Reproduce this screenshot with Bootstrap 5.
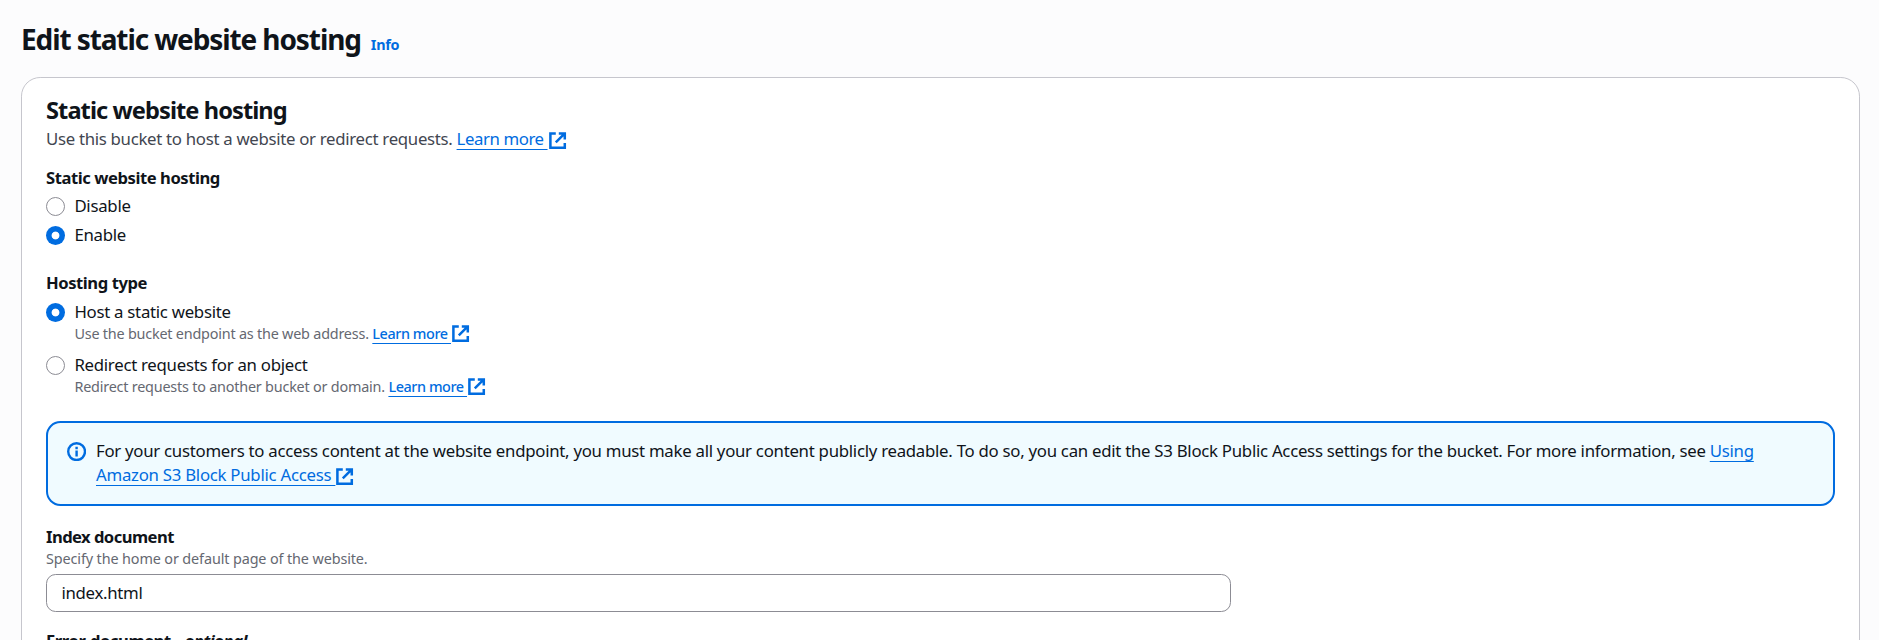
<!DOCTYPE html>
<html lang="en">
<head>
<meta charset="utf-8">
<meta name="viewport" content="width=device-width, initial-scale=1">
<title>Edit static website hosting</title>
<link href="https://cdn.jsdelivr.net/npm/bootstrap@5.3.0/dist/css/bootstrap.min.css" rel="stylesheet">
<style>
  body { font-family: "Noto Sans", "Open Sans", sans-serif; font-size: 16.8px; line-height: 24px; letter-spacing: -.27px; color: #0f141a; background: #fcfcfd; height: 640px; overflow: hidden; }
  .page-wrap { padding: 21px 19.5px 0 21px; height: 640px; overflow: hidden; }
  h1 { font-size: 28px; line-height: 36px; font-weight: 700; letter-spacing: -1.1px; }
  h2 { font-size: 23.6px; line-height: 30px; font-weight: 700; letter-spacing: -.92px; }
  a { color: #006ce0; text-decoration: none; }
  .info-link { font-size: 14.4px; font-weight: 700; letter-spacing: -.3px; margin-left: 10px; }
  .panel { border: 1px solid #c6c6cd; border-radius: 19.2px; padding: 17px 24px 0; margin-top: 20px; min-height: 620px; }
  .desc { color: #424650; margin-top: 2px; letter-spacing: -.3px; }
  .field-label { font-size: 16.6px; font-weight: 700; letter-spacing: -.44px; }
  .index-label { letter-spacing: -.55px; }
  .ext-link span { text-decoration: underline; text-decoration-thickness: 1px; text-underline-offset: 4px; text-decoration-skip-ink: none; letter-spacing: -.42px; }
  .ext-link svg { width: 19.2px; height: 19.2px; vertical-align: -5px; }
  .hint { font-size: 14.4px; line-height: 19px; color: #656871; letter-spacing: -.21px; }
  .hint .ext-link svg { vertical-align: top; margin-top: 0; margin-bottom: -2px; }
  .hint .ext-link span { font-weight: 500; }
  .ext-link.plain span { letter-spacing: -.26px; }
  .choice { gap: 9.4px; }
  .choice .form-check-input { width: 19px; height: 19px; margin: 3.4px 0 0; flex: none; border: 1px solid #8c8c94; background: #fff; box-shadow: none; }
  .choice .form-check-input:checked { border: 0; background: radial-gradient(circle, #fff 3.5px, #006ce0 4.3px); }
  .choice label { display: block; }
  .info-box { border: 2px solid #006ce0; border-radius: 14.4px; background: #f0fbff; height: 85px; padding: 16.5px 60px 0 19px; gap: 9.8px; margin-top: 25px; }
  .info-box svg.status { width: 19.2px; height: 19.2px; flex: none; margin-top: 3px; }
  .text-input { width: 1185px; height: 38px; border: 1px solid #8c8c94; border-radius: 9.6px; padding: 0 15px 1px 14.5px; font-size: 16.8px; color: #0f141a; letter-spacing: -.3px; background: #fff; }
</style>
</head>
<body>
<svg class="d-none" aria-hidden="true">
  <symbol id="external" viewBox="0 0 16 16">
    <path d="M9 2h5v5M6.500 9.500L14 2M14 10v4H2V2h4.500" fill="none" stroke="#006ce0" stroke-width="2.1"/>
  </symbol>
</svg>
<main class="page-wrap">
  <header class="d-flex align-items-baseline">
    <h1 class="mb-0">Edit static website hosting</h1>
    <a class="info-link" href="#">Info</a>
  </header>
  <section class="panel bg-white">
    <h2 class="mb-0">Static website hosting</h2>
    <p class="desc mb-0">Use this bucket to host a website or redirect requests. <a class="ext-link" href="#"><span>Learn more&nbsp;</span><svg><use href="#external"/></svg></a></p>

    <div class="field-label" style="margin-top:14.5px">Static website hosting</div>
    <div class="choice d-flex" style="margin-top:4px">
      <input class="form-check-input" type="radio" name="hosting" id="disable">
      <label for="disable">Disable</label>
    </div>
    <div class="choice d-flex" style="margin-top:5px">
      <input class="form-check-input" type="radio" name="hosting" id="enable" checked>
      <label for="enable">Enable</label>
    </div>

    <div class="field-label" style="margin-top:24px">Hosting type</div>
    <div class="choice d-flex" style="margin-top:5px">
      <input class="form-check-input" type="radio" name="type" id="host" checked>
      <div>
        <label for="host">Host a static website</label>
        <div class="hint">Use the bucket endpoint as the web address. <a class="ext-link" href="#"><span>Learn more&nbsp;</span><svg><use href="#external"/></svg></a></div>
      </div>
    </div>
    <div class="choice d-flex" style="margin-top:10px">
      <input class="form-check-input" type="radio" name="type" id="redirect">
      <div>
        <label for="redirect">Redirect requests for an object</label>
        <div class="hint">Redirect requests to another bucket or domain. <a class="ext-link" href="#"><span>Learn more&nbsp;</span><svg><use href="#external"/></svg></a></div>
      </div>
    </div>

    <div class="info-box d-flex">
      <svg class="status" viewBox="0 0 16 16" fill="none" stroke="#006ce0" stroke-width="2"><circle cx="8" cy="8" r="7"/><path d="M8 12V7M8 6V4"/></svg>
      <div>For your customers to access content at the website endpoint, you must make all your content publicly readable. To do so, you can edit the S3 Block Public Access settings for the bucket. For more information, see <a class="ext-link plain" href="#"><span>Using<br>Amazon S3 Block Public Access&nbsp;</span><svg><use href="#external"/></svg></a></div>
    </div>

    <div class="field-label index-label" style="margin-top:19px">Index document</div>
    <div class="hint" style="letter-spacing:-.12px">Specify the home or default page of the website.</div>
    <input class="text-input d-block" style="margin-top:6px" type="text" value="index.html" aria-label="Index document">
    <div class="field-label" style="margin-top:17.5px;word-spacing:.7px">Error document - <em>optional</em></div>
  </section>
</main>
<script src="https://cdn.jsdelivr.net/npm/bootstrap@5.3.0/dist/js/bootstrap.bundle.min.js"></script>
</body>
</html>
